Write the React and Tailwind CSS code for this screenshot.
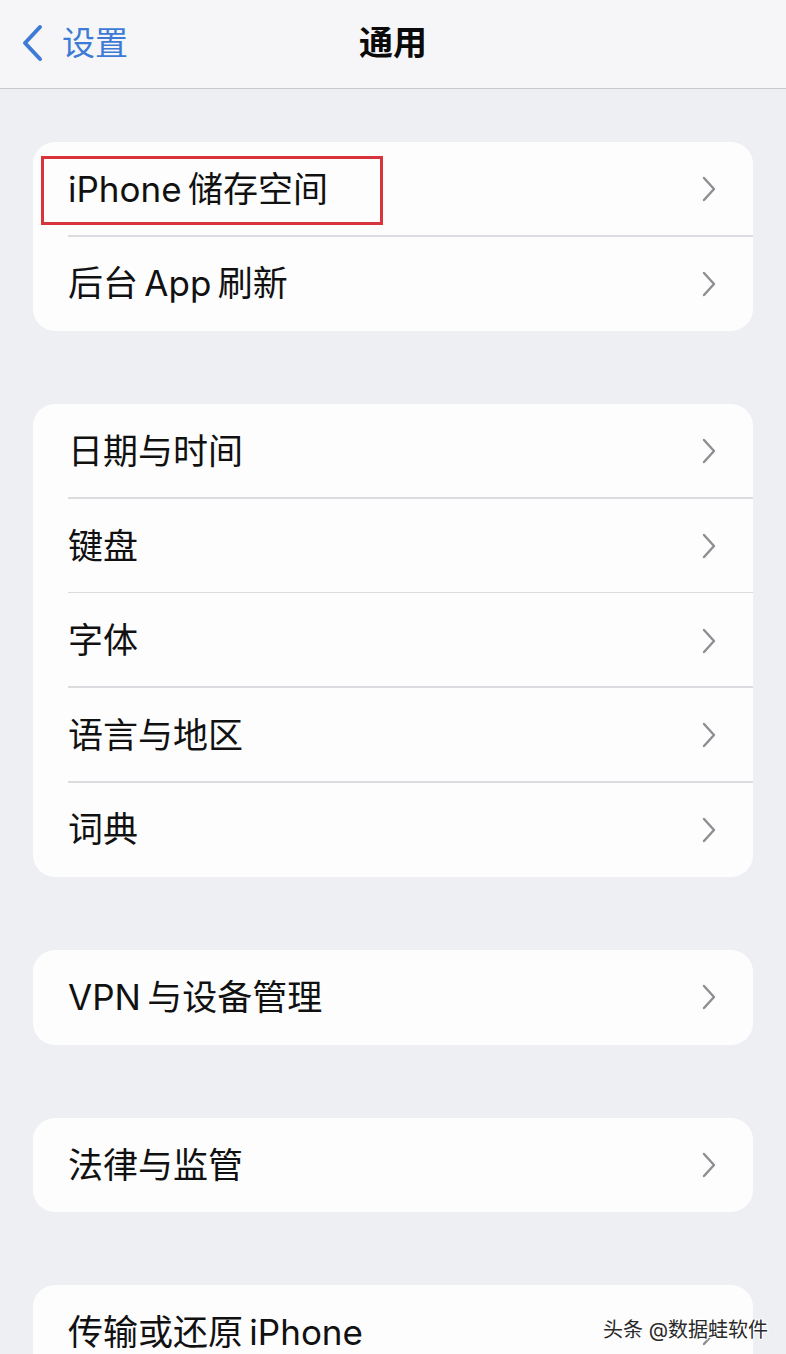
import React from "react";

const font = { fontFamily: '"Inter", "Noto Sans CJK SC", sans-serif' };

function Chevron() {
  return (
    <svg width="16" height="28" viewBox="0 0 16 28" className="shrink-0">
      <path d="M3 3 L13 14 L3 25" fill="none" stroke="#8d8d92" strokeWidth="2.4" strokeLinecap="round" strokeLinejoin="round" />
    </svg>
  );
}

function Row({ label, last, boxed }) {
  return (
    <div className="relative h-[94.6px] flex items-center pl-[35px] pr-[36px]">
      <span className="flex-1 text-[35px] text-[#111] leading-none whitespace-nowrap">{label}</span>
      <Chevron />
      {!last && <div className="absolute left-[35px] right-0 bottom-0 h-[1.5px] bg-[#dcdce0]" />}
      {boxed && (
        <div className="absolute left-[8px] top-[14px] w-[342px] h-[69px] border-[3px] border-[#d8343c]" />
      )}
    </div>
  );
}

function Group({ items, boxedIndex = -1 }) {
  return (
    <div className="mx-[33px] bg-[#fdfdfe] rounded-[22px] overflow-hidden">
      {items.map((t, i) => (
        <Row key={t} label={t} last={i === items.length - 1} boxed={i === boxedIndex} />
      ))}
    </div>
  );
}

export default function App() {
  return (
    <div className="w-[786px] h-[1354px] overflow-hidden bg-[#eeeff3] relative" style={font}>
      <div className="h-[89px] bg-[#f6f6f8] border-b-[1.5px] border-[#c9c9cd] flex items-center relative">
        <div className="flex items-center pl-[20px] -mt-[2px]">
          <svg width="24" height="38" viewBox="0 0 24 38">
            <path d="M20 3 L5 19 L20 35" fill="none" stroke="#3d7bd6" strokeWidth="4" strokeLinecap="round" strokeLinejoin="round" />
          </svg>
          <span className="ml-[18px] text-[33px] text-[#3d7bd6] leading-none">设置</span>
        </div>
        <div className="absolute inset-0 flex items-center justify-center -mt-[2px]">
          <span className="text-[34px] font-bold text-[#0a0a0a] leading-none">通用</span>
        </div>
      </div>
      <div className="pt-[53px] flex flex-col gap-[73px]">
        <Group items={["iPhone\u2009储存空间", "后台\u2009App\u2009刷新"]} boxedIndex={0} />
        <Group items={["日期与时间", "键盘", "字体", "语言与地区", "词典"]} />
        <Group items={["VPN\u2009与设备管理"]} />
        <Group items={["法律与监管"]} />
        <Group items={["传输或还原\u2009iPhone"]} />
      </div>
      <div
        className="absolute right-[18px] bottom-[14px] text-[20px] text-[#2a2a2a] leading-none"
        style={{ textShadow: "1px 1px 0 #fff, -1px -1px 0 #fff, 1px -1px 0 #fff, -1px 1px 0 #fff" }}
      >
        头条 @数据蛙软件
      </div>
    </div>
  );
}
